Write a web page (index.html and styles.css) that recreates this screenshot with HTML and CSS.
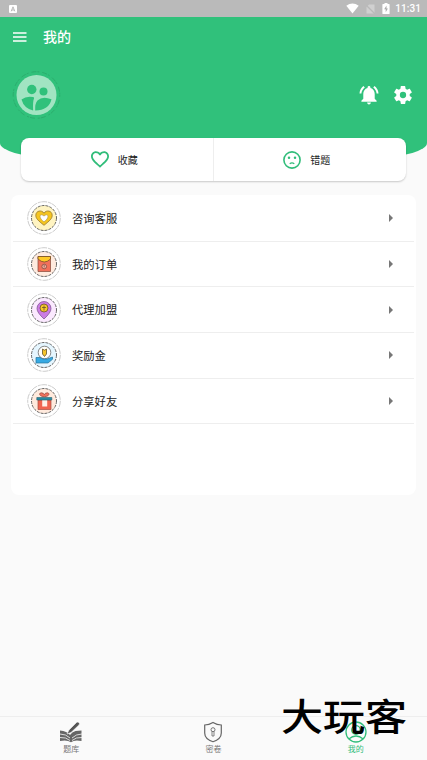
FILE: index.html
```html
<!DOCTYPE html>
<html lang="zh-CN">
<head>
<meta charset="utf-8">
<title>我的</title>
<link rel="stylesheet" href="styles.css">
</head>
<body>
<div class="app">
  <div class="status">
    <svg class="status-app" viewBox="0 0 8 8"><rect width="8" height="8" rx="1" fill="#fff"/><path d="M2.2 6.3L4 1.8l1.8 4.5M2.9 5h2.2" fill="none" stroke="#aaa" stroke-width=".8"/></svg>
    <div class="status-right">
      <svg width="13" height="11" viewBox="0 0 13 11"><path d="M.3 2.7Q6.5-1.9 12.7 2.7L6.5 10.5z" fill="#fff"/></svg>
      <svg width="9" height="10" viewBox="0 0 9 10"><path d="M3 .5h5.500v9H.5V3z" fill="#d0d0d0"/><path d="M0 1l9 9" stroke="#b9b9b9" stroke-width="1.3"/></svg>
      <svg width="8" height="11" viewBox="0 0 8 11"><path d="M2.5 0h3v1H7a.6.6 0 0 1 .6.6v8.800a.6.6 0 0 1-.6.6H1a.6.6 0 0 1-.6-.6V1.600A.6.6 0 0 1 1 1h1.500z" fill="#fff"/><path d="M4.500 2.500L2.200 6.300h1.500v3L5.900 5.400H4.500z" fill="#aaa"/></svg>
      <span class="clock">11:31</span>
    </div>
  </div>
  <header class="hero">
    <div class="toolbar">
      <svg width="14" height="10" viewBox="0 0 14 10"><path d="M0 1h13.500M0 5h13.500M0 9h13.500" stroke="#fff" stroke-width="1.5"/></svg>
      <h1>我的</h1>
    </div>
    <div class="profile">
      <svg class="avatar" viewBox="0 0 48 48">
        <circle cx="24" cy="24" r="23.300" fill="none" stroke="#27985e" stroke-width=".5" stroke-dasharray="2 3 5 1"/>
        <circle cx="24" cy="24" r="20" fill="#a1e4c2"/>
        <g fill="#30c17b"><circle cx="19.300" cy="18.500" r="4.700"/><circle cx="31" cy="20.500" r="4"/>
        <path d="M9 28.500q5-3.800 11.500-2.400 1.500.3 1 1.500-1.300 3-.9 11.800Q11.500 37.500 9 28.500zM22.700 39.500q-.4-7 2.300-10 5-5 14-1.200-2.500 11-16.300 11.200z"/></g>
      </svg>
      <div class="tools">
        <svg width="20" height="20" viewBox="1.500 1.500 21 21" fill="#fff"><path d="M7.580 4.080L6.150 2.650C3.750 4.480 2.170 7.300 2.030 10.500h2c.15-2.650 1.510-4.970 3.550-6.420zm12.390 6.420h2c-.15-3.200-1.730-6.020-4.120-7.850l-1.420 1.430c2.020 1.450 3.390 3.770 3.540 6.420zM18 11c0-3.070-1.640-5.640-4.500-6.320V4c0-.83-.67-1.500-1.500-1.500s-1.500.67-1.500 1.500v.68C7.630 5.360 6 7.920 6 11v5l-2 2v1h16v-1l-2-2v-5zm-6 11c1.100 0 2-.9 2-2h-4c0 1.100.9 2 2 2z"/></svg>
        <svg width="18" height="18" viewBox="2 2 20 20" fill="#fff"><path d="M19.430 12.980c.04-.32.07-.64.07-.98s-.03-.66-.07-.98l2.110-1.650c.19-.15.24-.42.12-.64l-2-3.460c-.12-.22-.39-.3-.61-.22l-2.490 1c-.52-.4-1.080-.73-1.690-.98l-.38-2.650A.49.49 0 0 0 14 2h-4c-.25 0-.46.18-.49.42l-.38 2.650c-.61.25-1.170.59-1.690.98l-2.490-1c-.23-.09-.49 0-.61.22l-2 3.460c-.13.22-.07.49.12.64l2.110 1.650c-.04.32-.07.65-.07.98s.03.66.07.98l-2.110 1.650c-.19.15-.24.42-.12.64l2 3.460c.12.22.39.3.61.22l2.490-1c.52.4 1.080.73 1.690.98l.38 2.650c.03.24.24.42.49.42h4c.25 0 .46-.18.49-.42l.38-2.650c.61-.25 1.170-.59 1.690-.98l2.490 1c.23.09.49 0 .61-.22l2-3.460c.12-.22.07-.49-.12-.64zM12 15.500a3.500 3.500 0 1 1 0-7 3.500 3.500 0 0 1 0 7z"/></svg>
      </div>
    </div>
  </header>
  <section class="quick">
    <div class="quick-item">
      <svg width="18" height="17" viewBox="2 3 20 18.350"><path fill="#31bd7a" d="M16.500 3c-1.740 0-3.410.81-4.500 2.090C10.910 3.810 9.240 3 7.500 3 4.420 3 2 5.420 2 8.500c0 3.780 3.400 6.860 8.550 11.540L12 21.350l1.450-1.320C18.600 15.360 22 12.280 22 8.500 22 5.420 19.580 3 16.500 3zm-4.400 15.550l-.1.100-.1-.1C7.140 14.240 4 11.390 4 8.500 4 6.500 5.500 5 7.500 5c1.540 0 3.040.99 3.570 2.360h1.870C13.460 5.990 14.960 5 16.500 5c2 0 3.500 1.500 3.500 3.500 0 2.890-3.140 5.740-7.900 10.050z"/></svg>
      <span>收藏</span>
    </div>
    <div class="quick-item">
      <svg width="18" height="18" viewBox="0 0 18 18"><circle cx="9" cy="9" r="8.100" fill="none" stroke="#31bd7a" stroke-width="1.600"/><g fill="#31bd7a"><circle cx="6" cy="6.800" r="1.250"/><circle cx="12" cy="6.800" r="1.250"/></g><path d="M6.700 12.700Q9 11 11.300 12.700" fill="none" stroke="#31bd7a" stroke-width="1.200"/></svg>
      <span>错题</span>
    </div>
  </section>
  <main class="menu">
    <div class="row">
      <svg class="badge" viewBox="0 0 34 34"><circle class="outer" cx="17" cy="17" r="16.300"/><circle class="inner" cx="17" cy="17" r="12.500" fill="#fff4c2"/><path d="M17 24.300C11 19.500 8.800 17.500 8.800 14.300c0-4.700 5.900-5.800 8.200-2.100 2.300-3.700 8.200-2.600 8.200 2.100 0 3.200-2.200 5.200-8.200 10z" fill="#f5c51f" stroke="#957529" stroke-width=".8"/><path d="M17 20.800c-5-3.500-4.700-7.200-2-7l2 1.200 2-1.200c2.700-.2 3 3.500-2 7z" fill="#fff" stroke="#9c8542" stroke-width=".5"/></svg>
      <span class="label">咨询客服</span><i class="arrow"></i>
    </div>
    <div class="row">
      <svg class="badge" viewBox="0 0 34 34"><circle class="outer" cx="17" cy="17" r="16.300"/><circle class="inner" cx="17" cy="17" r="12.500" fill="#ffebdf"/><path d="M11 9.500h12.500v15H11z" fill="#f1705a" stroke="#83483a" stroke-width=".7"/><path d="M11 9.500h12.500v2.500q-6.200 6-12.500 0z" fill="#ffc928" stroke="#765027" stroke-width=".8"/><circle cx="17.200" cy="19.500" r="2.300" fill="#f8b29e" stroke="#70433c" stroke-width=".7"/><path d="M17.200 18v2.500" stroke="#70433c" stroke-width=".7"/></svg>
      <span class="label">我的订单</span><i class="arrow"></i>
    </div>
    <div class="row">
      <svg class="badge" viewBox="0 0 34 34"><circle class="outer" cx="17" cy="17" r="16.300"/><circle class="inner" cx="17" cy="17" r="12.500" fill="#fbe9ff"/><path d="M17 26q-7-6.300-7-10.500a7 7 0 0 1 14 0Q24 19.700 17 26z" fill="#cb7be4" stroke="#79508a" stroke-width=".7"/><circle cx="17" cy="15" r="4" fill="#f7c92b" stroke="#69502d" stroke-width=".8"/><path d="M17 12.500v5M15 14.500h4" fill="none" stroke="#69502d" stroke-width=".8"/></svg>
      <span class="label">代理加盟</span><i class="arrow"></i>
    </div>
    <div class="row">
      <svg class="badge" viewBox="0 0 34 34"><circle class="outer" cx="17" cy="17" r="16.300"/><circle class="inner" cx="17" cy="17" r="12.500" fill="#e5f6ff"/><circle cx="17.500" cy="14.500" r="6.300" fill="#fffefa" stroke="#555" stroke-width=".7"/><path d="M15.500 11l2 1.200 2-1.200v5l-2 2.500-2-2.500z" fill="#f5c529" stroke="#655629" stroke-width=".8"/><path d="M9 19.500h4l3 1.500h4l5.500-2v2.300L21 25H9z" fill="#35a9e3" stroke="#28749a" stroke-width=".7"/></svg>
      <span class="label">奖励金</span><i class="arrow"></i>
    </div>
    <div class="row">
      <svg class="badge" viewBox="0 0 34 34"><circle class="outer" cx="17" cy="17" r="16.300"/><circle class="inner" cx="17" cy="17" r="12.500" fill="#ffeadd"/><path d="M11 16h13v9.500H11z" fill="#f06450" stroke="#a64d41" stroke-width=".7"/><path d="M15.200 16h5v6.500h-5z" fill="#fff0e8"/><path d="M9.800 13.500h15v2.500h-15z" fill="#268aa2" stroke="#295e6c" stroke-width=".6"/><path d="M17.300 12.700c-5 0-6-3.700-3-3.900q2.400 0 3 2 .6-2 3-2c3 .2 2 3.900-3 3.900z" fill="#f1705a" stroke="#9c4e44" stroke-width=".8"/></svg>
      <span class="label">分享好友</span><i class="arrow"></i>
    </div>
  </main>
  <nav class="tabs">
    <div class="tab">
      <svg width="24" height="22" viewBox="0 0 24 22"><path d="M1 9.500q7 .5 10 4.500 2-3 5.500-4l6-.5V20q-7-1.500-10.500 1.200Q8 18.500 1 20z" fill="#666"/><path d="M1 13q6 0 10 4M1 16.500q6-.5 10 3M13 17q4-4 10-4M13 19.500q4-3.500 10-3" fill="none" stroke="#fafafa" stroke-width=".8"/><path d="M8 13l2-4 7.500-7.500q1.300-1 2.400 0 1.200 1.200.1 2.400L12 11.500z" fill="#555" stroke="#fafafa" stroke-width=".6"/></svg>
      <span>题库</span>
    </div>
    <div class="tab">
      <svg width="20" height="22" viewBox="0 0 20 22"><path d="M10 1.500Q14 4 18.300 4v8q0 6-8.300 8.700Q1.700 18 1.700 12V4Q6 4 10 1.500z" fill="none" stroke="#666" stroke-width="1.200"/><path d="M9 10.500v4.500h2v-4.500" fill="none" stroke="#666" stroke-width=".8"/><circle cx="10" cy="8.700" r="2" fill="none" stroke="#666" stroke-width=".9"/></svg>
      <span>密卷</span>
    </div>
    <div class="tab active">
      <svg width="22" height="22" viewBox="0 0 22 22" fill="none" stroke="#31bd7a" stroke-width="1.300"><circle cx="11" cy="11" r="10"/><circle cx="11" cy="9" r="4.300"/><path d="M3.800 18q7.200-6 14.400 0"/></svg>
      <span>我的</span>
    </div>
  </nav>
  <div class="watermark">大玩客</div>
</div>
</body>
</html>
```
FILE: styles.css
```css
* { box-sizing: border-box; }
body { margin: 0; font-family: Roboto, "Noto Sans CJK SC", sans-serif; color: #222; }
svg { display: block; flex: none; }
.app { position: relative; display: flex; flex-direction: column; width: 427px; height: 760px; overflow: hidden; background: #fafafa; }
.status { display: flex; align-items: center; justify-content: space-between; height: 17px; padding: 0 6px 0 9px; background: #bababa; }
.status-app { width: 8px; height: 8px; }
.status-right { display: flex; align-items: center; gap: 7px; }
.clock { margin-left: -2px; color: #fff; font-size: 10px; letter-spacing: .1px; font-weight: 500; line-height: 19px; }
.hero { height: 140px; background: #30c17b; border-radius: 0 0 50px 50px / 0 0 14px 14px; }
.toolbar { display: flex; align-items: center; height: 40px; gap: 16px; padding-left: 13px; }
h1 { margin: 0; color: #fff; font-size: 14px; font-weight: 500; line-height: 20px; }
.profile { display: flex; align-items: center; justify-content: space-between; height: 48px; margin-top: 14px; padding: 0 15px 0 12px; }
.avatar { width: 49px; height: 48px; }
.tools { display: flex; align-items: center; gap: 15px; }
.quick { position: relative; display: flex; height: 43px; margin: -19px 21px 0; border-radius: 8px; background: #fff; box-shadow: 0 1px 2px #0003; }
.quick-item { flex: 1; display: flex; align-items: center; justify-content: center; gap: 9px; padding-right: 5px; font-size: 10px; }
.quick-item:first-child { border-right: 1px solid #eee; }
.quick-item:last-child { padding-right: 6px; }
.menu { height: 300px; margin: 14px 11px 0; border-radius: 8px; background: #fff; padding: 1px 2px 0; }
.row { display: flex; align-items: center; height: 45.700px; padding: 0 21px 0 14px; border-bottom: 1.500px solid #eee; }
.badge { width: 34px; height: 34px; }
.outer { fill: #fff; stroke: #aaa; stroke-width: .6; stroke-dasharray: 6 1 3 .5; }
.inner { stroke: #444; stroke-width: .8; stroke-dasharray: 3 1; }
.label { flex: 1; margin: 3px 0 0 11px; font-size: 11.300px; line-height: 20px; }
.arrow { width: 4px; border: 4px solid transparent; border-left-color: #777; border-right: 0; }
.tabs { display: flex; height: 44px; margin-top: auto; border-top: 1px solid #eee; }
.tab { flex: 1; display: flex; flex-direction: column; align-items: center; padding-top: 4px; color: #777; font-size: 8px; line-height: 13px; }
.tab.active { color: #31bd7a; }
.watermark { position: absolute; left: 281px; top: 696px; color: #000; font: 500 42px/38px "Noto Sans CJK SC", sans-serif; white-space: nowrap; transform: scaleY(.88); transform-origin: 0 50%; }
```
